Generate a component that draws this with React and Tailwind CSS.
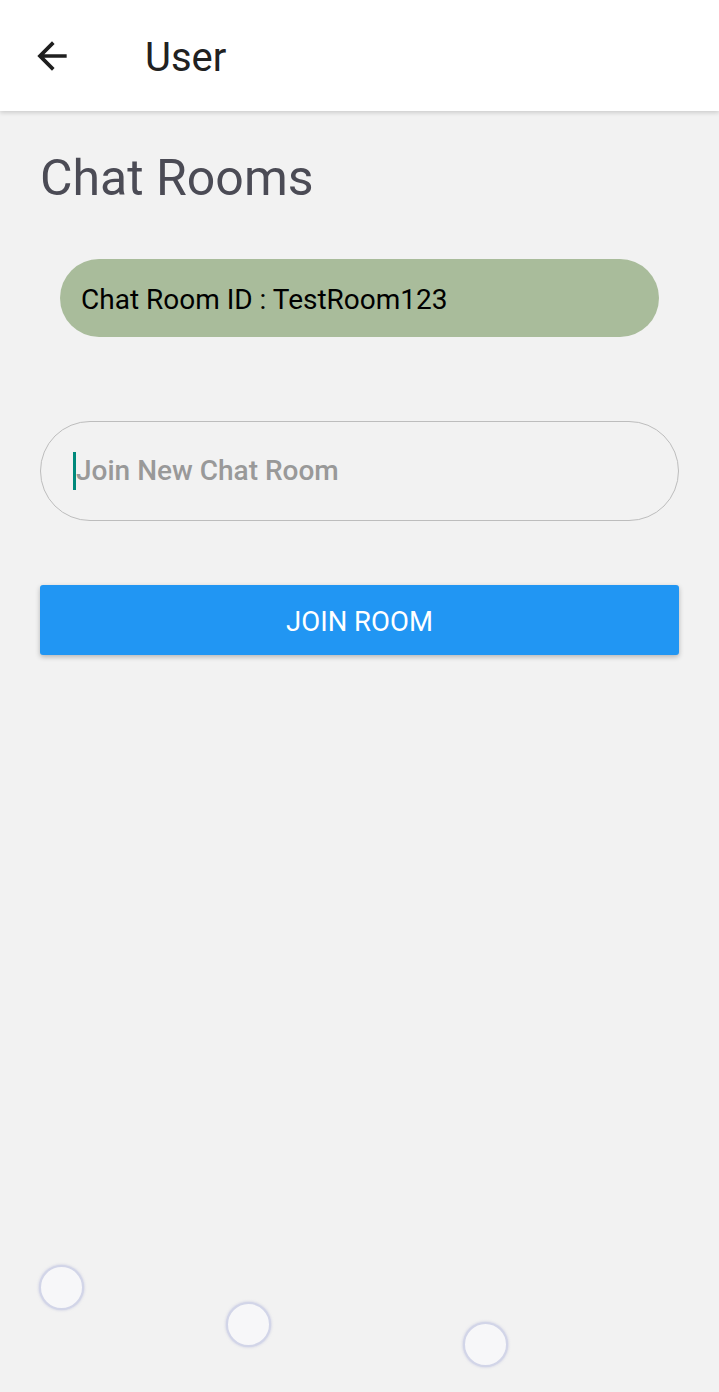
import { useState } from "react";

const Bubble = ({ className }) => (
  <div
    className={`absolute w-[45px] h-[45px] rounded-full bg-[#f7f7f9] border-2 border-[#d2d5e8] shadow-[0_0_3px_rgba(160,165,210,0.6)] ${className}`}
  />
);

export default function App() {
  const [room, setRoom] = useState("");

  return (
    <div className="relative w-[719px] h-[1392px] bg-[#f2f2f2] overflow-hidden font-['Roboto',_'Liberation_Sans',_sans-serif]">
      {/* Header */}
      <div className="h-[111px] bg-white flex items-center shadow-[0_2px_4px_rgba(0,0,0,0.15)] relative z-10">
        <button className="ml-[30px] w-[44px] h-[44px] flex items-center justify-center text-[#1f1f1f]">
          <svg width="44" height="44" viewBox="0 0 24 24" fill="currentColor">
            <path d="M20 11H7.83l5.59-5.59L12 4l-8 8 8 8 1.41-1.41L7.83 13H20v-2z" />
          </svg>
        </button>
        <h1 className="ml-[71px] text-[40px] text-[#212121] leading-none mt-[4px]">User</h1>
      </div>

      {/* Content */}
      <div className="px-[40px] pt-[39px]">
        <h2 className="text-[50px] leading-[56px] text-[#4b4b55]">Chat Rooms</h2>

        <div className="mt-[53px] mx-[20px] h-[78px] rounded-full bg-[#a9bc9b] flex items-center px-[21px]">
          <span className="text-[28px] text-black mt-[3px]">Chat Room ID : TestRoom123</span>
        </div>

        <div className="mt-[84px] h-[100px] rounded-full border border-[#bdbdbd] flex items-center px-[32px]">
          <span className="w-[3px] h-[38px] bg-[#00897b] shrink-0" />
          <input
            value={room}
            onChange={(e) => setRoom(e.target.value)}
            placeholder="Join New Chat Room"
            className="flex-1 bg-transparent outline-none text-[28px] font-medium text-[#333] placeholder:text-[#999999] placeholder:font-medium"
          />
        </div>

        <button className="mt-[64px] w-full h-[70px] rounded-[3px] bg-[#2196f3] text-white text-[27.5px] uppercase pt-[4px] shadow-[0_2px_5px_rgba(0,0,0,0.25)]">
          Join Room
        </button>
      </div>

      {/* floating bubbles */}
      <Bubble className="left-[39px] top-[1265px]" />
      <Bubble className="left-[226px] top-[1302px]" />
      <Bubble className="left-[463px] top-[1322px]" />
    </div>
  );
}
